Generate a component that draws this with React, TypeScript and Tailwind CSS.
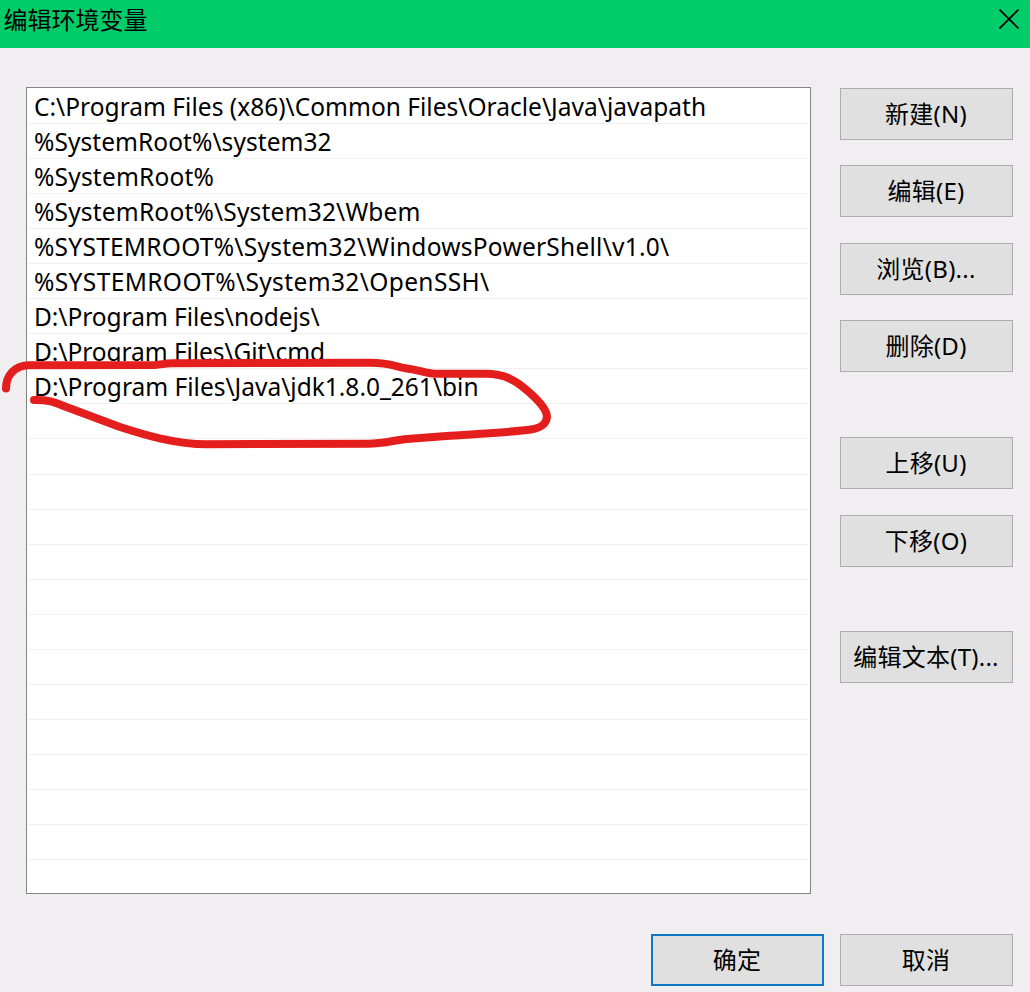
const paths = [
  { value: 'C:\\Program Files (x86)\\Common Files\\Oracle\\Java\\javapath', tracking: 'tracking-[0.02px]' },
  { value: '%SystemRoot%\\system32', tracking: 'tracking-[0.06px]' },
  { value: '%SystemRoot%', tracking: 'tracking-[0.2px]' },
  { value: '%SystemRoot%\\System32\\Wbem', tracking: 'tracking-[0.19px]' },
  { value: '%SYSTEMROOT%\\System32\\WindowsPowerShell\\v1.0\\', tracking: 'tracking-[0.25px]' },
  { value: '%SYSTEMROOT%\\System32\\OpenSSH\\', tracking: 'tracking-[0.38px]' },
  { value: 'D:\\Program Files\\nodejs\\', tracking: 'tracking-[-0.04px]' },
  { value: 'D:\\Program Files\\Git\\cmd', tracking: 'tracking-[-0.06px]' },
  { value: 'D:\\Program Files\\Java\\jdk1.8.0_261\\bin', tracking: 'tracking-normal' },
];

const ROW_COUNT = 22;

function DialogButton({ label, primary }: { label: string; primary?: boolean }) {
  return (
    <button
      className={`h-[52px] w-[173px] shrink-0 bg-[#e1e0e1] pr-px text-2xl leading-none tracking-[0.25px] whitespace-nowrap ${
        primary ? 'border-2 border-[#0f78cb]' : 'border border-[#adadad]'
      }`}
    >
      {label}
    </button>
  );
}

export default function App() {
  return (
    <div className="relative h-[992px] w-[1030px] overflow-hidden bg-[#f0eef0] font-['Noto_Sans','Noto_Sans_CJK_SC',sans-serif] text-black">
      <header className="flex h-12 justify-between bg-[#00cd6a] pl-[3.5px]">
        <h1 className="pt-0.5 text-2xl leading-9">编辑环境变量</h1>
        <svg className="mt-[9px] mr-[11px] size-5" viewBox="0 0 20 20" stroke="black" strokeWidth="1.8">
          <path d="M0.5 0.5 19.5 19.5M19.5 0.5 0.5 19.5" />
        </svg>
      </header>

      <main className="flex justify-between pt-[39px] pr-[17px] pl-[26px]">
        <ul className="h-[807px] w-[785px] border border-[#828485] bg-white pt-px pr-0.5 pl-px">
          {Array.from({ length: ROW_COUNT }, (_, i) => (
            <li
              key={i}
              className={`h-[35.05px] border-b border-[#f0f0f0] pl-1.5 text-[24.5px] leading-9 whitespace-nowrap ${paths[i]?.tracking ?? ''}`}
            >
              {paths[i]?.value}
            </li>
          ))}
        </ul>

        <div className="flex flex-col pt-px">
          <div className="flex flex-col gap-[25.4px]">
            <DialogButton label="新建(N)" />
            <DialogButton label="编辑(E)" />
            <DialogButton label="浏览(B)..." />
            <DialogButton label="删除(D)" />
          </div>
          <div className="mt-[65px] flex flex-col gap-[26px]">
            <DialogButton label="上移(U)" />
            <DialogButton label="下移(O)" />
          </div>
          <div className="mt-16">
            <DialogButton label="编辑文本(T)..." />
          </div>
        </div>
      </main>

      <footer className="mt-10 flex justify-end gap-4 pr-[17px]">
        <DialogButton label="确定" primary />
        <DialogButton label="取消" />
      </footer>

      {/* hand-drawn marker around the JDK entry */}
      <svg
        className="pointer-events-none absolute inset-0 size-full"
        viewBox="0 0 1030 992"
        fill="none"
        stroke="#e31e1d"
        strokeWidth="8"
        strokeLinecap="round"
        strokeLinejoin="round"
      >
        <path d="M6 388.5C6 375 15 366 28 365.3L155 365C162 364.5 165 363.2 172 363.2L370 362.8C391 363 393 366 407 368.5C420 370 425 373.5 435 373.8L485 373.8C505 373.5 517 381 530 393C540 402 547 411 547 417C546 425 540 428 531 429.5C515 432 480 433.5 450 435.8L407 439C395 440 384 443.7 368 443.7L207 444.3C175 444.3 145 435 120 427L65 406.5C55 402.5 50 399.8 34 400" />
      </svg>
    </div>
  );
}
